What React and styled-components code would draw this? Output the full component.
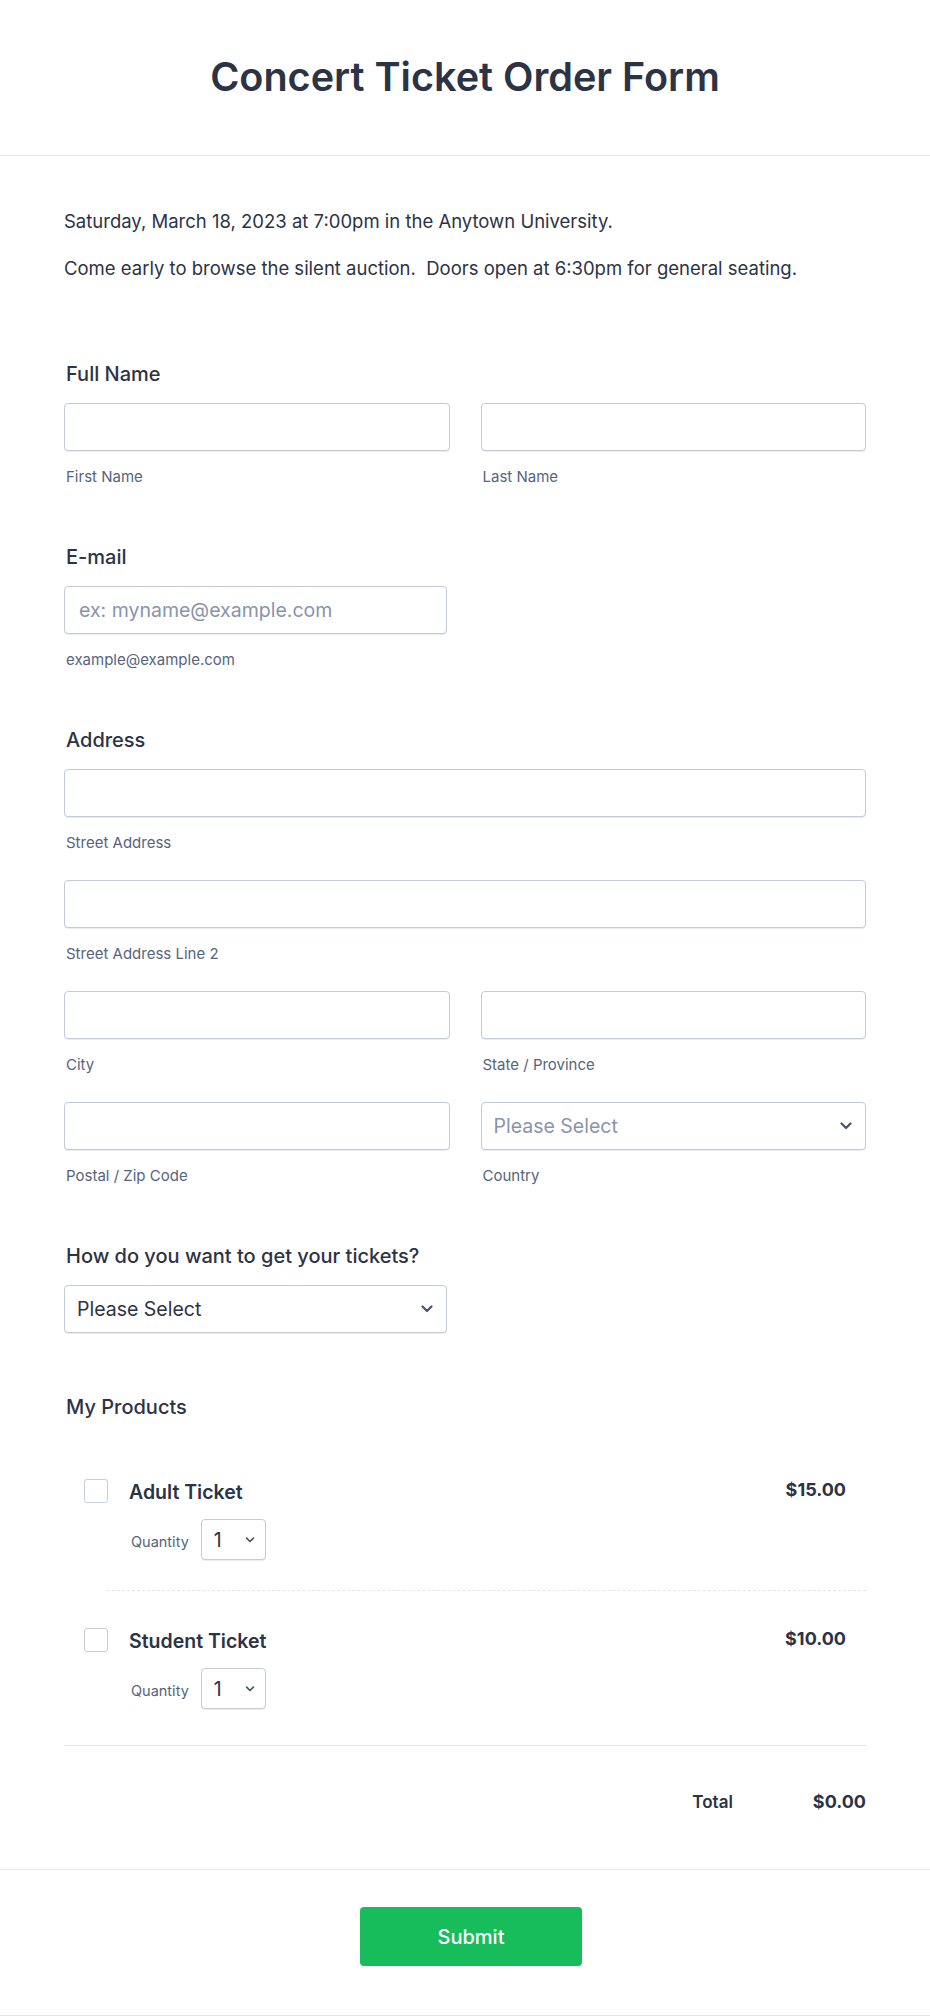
import React from 'react';
import styled, { createGlobalStyle } from 'styled-components';

const Global = createGlobalStyle`
  * { box-sizing: border-box; }
  body {
    margin: 0;
    background: #fff;
    font-family: Inter, "Noto Sans", sans-serif;
    color: #2c3345;
  }
`;

const Page = styled.div`
  width: 930px;
  background: #fff;
  display: flex;
  flex-direction: column;
`;

const Header = styled.header`
  padding: 53px 0 54px;
  border-bottom: 1px solid #e3e5f5;
  text-align: center;
`;

const Title = styled.h1`
  margin: 0;
  font-size: 39.6px;
  line-height: 48px;
  font-weight: 600;
  color: #2c3345;
`;

const Body = styled.main`
  padding: 53px 64px 55px;
`;

const Para = styled.p`
  margin: 0 0 23px;
  font-size: 18.5px;
  line-height: 24px;
  &:last-child { margin-bottom: 0; }
`;

const Fields = styled.div`
  display: flex;
  flex-direction: column;
  gap: 59px;
  padding-top: 82px;
`;

const Field = styled.section`
  display: flex;
  flex-direction: column;
  margin-top: ${p => p.$extra || 0}px;
`;

const Label = styled.div`
  font-size: 20px;
  line-height: 24px;
  font-weight: 500;
  padding-left: 2px;
  margin-bottom: 17px;
`;

const Grid = styled.div`
  display: grid;
  grid-template-columns: ${p => (p.$cols === 2 ? '1fr 1fr' : '1fr')};
  column-gap: 31px;
  row-gap: 28px;
  width: ${p => p.$width || '100%'};
`;

const Cell = styled.div`
  display: flex;
  flex-direction: column;
  grid-column: ${p => (p.$full ? '1 / -1' : 'auto')};
`;

const Input = styled.input`
  height: 48px;
  width: 100%;
  border: 1px solid #c3cad8;
  border-radius: 4px;
  padding: 0 14px;
  font-family: inherit;
  font-size: 19.5px;
  color: #2c3345;
  background: #fff;
  outline: none;
  box-shadow: 0 1px 0 rgba(195, 202, 216, 0.35);
  &::placeholder { color: #8894ab; }
`;

const Sub = styled.div`
  margin-top: 17px;
  font-size: 15px;
  line-height: 18px;
  color: #57647e;
  padding-left: 2px;
`;

const SelectWrap = styled.div`
  position: relative;
  width: ${p => p.$width || '100%'};
`;

const Select = styled.select`
  appearance: none;
  -webkit-appearance: none;
  width: 100%;
  height: ${p => (p.$small ? '41px' : '48px')};
  border: 1px solid #c3cad8;
  border-radius: 4px;
  padding: ${p => (p.$small ? '0 0 0 12px' : '0 40px 0 12px')};
  font-family: inherit;
  font-size: 19.5px;
  color: ${p => (p.$placeholder ? '#8894ab' : '#2c3345')};
  background: #fff;
  outline: none;
  box-shadow: 0 1px 0 rgba(195, 202, 216, 0.35);
`;

const Chevron = styled.svg`
  position: absolute;
  right: ${p => (p.$small ? '11px' : '14px')};
  top: 50%;
  transform: translateY(-50%);
  pointer-events: none;
`;

const ChevronIcon = ({ small }) => (
  <Chevron $small={small} width={small ? 10 : 12} height={small ? 6 : 8} viewBox="0 0 12 8" fill="none">
    <path d="M1.5 1.5L6 6l4.5-4.5" stroke="#4a5468" strokeWidth="2.2" strokeLinecap="round" strokeLinejoin="round" />
  </Chevron>
);

const ProductList = styled.div`
  margin-top: 6px;
  padding-bottom: 6px;
  border-bottom: 1px solid #e3e5ec;
`;

const Item = styled.div`
  display: flex;
  align-items: flex-start;
  padding: 38px 20px 30px;
`;

const Check = styled.span`
  width: 24px;
  height: 24px;
  flex: none;
  border: 1px solid #c8cedb;
  border-radius: 3px;
  margin-top: -1px;
  background: #fff;
`;

const Info = styled.div`
  flex: 1;
  margin-left: 21px;
  display: flex;
  flex-direction: column;
`;

const Name = styled.div`
  font-size: 19.5px;
  line-height: 24px;
  font-weight: 600;
`;

const QtyRow = styled.div`
  display: flex;
  align-items: center;
  margin-top: 15px;
  padding-left: 2px;
  gap: 12px;
`;

const QtyLabel = styled.span`
  font-size: 14.5px;
  color: #57647e;
  padding-top: 3px;
`;

const Price = styled.div`
  font-size: 18px;
  line-height: 24px;
  font-weight: 700;
  margin-top: -2px;
`;

const Divider = styled.div`
  margin-left: 43px;
  border-top: 1px dashed #e3e5f0;
`;

const TotalRow = styled.div`
  display: flex;
  justify-content: flex-end;
  align-items: baseline;
  gap: 80px;
  padding-top: 44px;
`;

const TotalLabel = styled.span`
  font-size: 17px;
  line-height: 24px;
  font-weight: 600;
`;

const TotalValue = styled.span`
  font-size: 18px;
  line-height: 24px;
  font-weight: 700;
`;

const Footer = styled.footer`
  border-top: 1px solid #e3e5f5;
  border-bottom: 1px solid #e3e5f5;
  padding: 37px 0 49px 12px;
  display: flex;
  justify-content: center;
`;

const Submit = styled.button`
  width: 222px;
  height: 59px;
  border: none;
  border-radius: 4px;
  background: #18bd5b;
  color: #fff;
  font-family: inherit;
  font-size: 20px;
  font-weight: 500;
  cursor: pointer;
`;

const products = [
  { name: 'Adult Ticket', price: '$15.00' },
  { name: 'Student Ticket', price: '$10.00' },
];

export default function App() {
  return (
    <Page>
      <Global />
      <Header>
        <Title>Concert Ticket Order Form</Title>
      </Header>
      <Body>
        <div>
          <Para>Saturday, March 18, 2023 at 7:00pm in the Anytown University.</Para>
          <Para>Come early to browse the silent auction.&nbsp; Doors open at 6:30pm for general seating.</Para>
        </div>
        <Fields>
          <Field>
            <Label>Full Name</Label>
            <Grid $cols={2}>
              <Cell><Input type="text" /><Sub>First Name</Sub></Cell>
              <Cell><Input type="text" /><Sub>Last Name</Sub></Cell>
            </Grid>
          </Field>
          <Field>
            <Label>E-mail</Label>
            <Grid $width="383px">
              <Cell><Input type="email" placeholder="ex: myname@example.com" /><Sub>example@example.com</Sub></Cell>
            </Grid>
          </Field>
          <Field>
            <Label>Address</Label>
            <Grid $cols={2}>
              <Cell $full><Input type="text" /><Sub>Street Address</Sub></Cell>
              <Cell $full><Input type="text" /><Sub>Street Address Line 2</Sub></Cell>
              <Cell><Input type="text" /><Sub>City</Sub></Cell>
              <Cell><Input type="text" /><Sub>State / Province</Sub></Cell>
              <Cell><Input type="text" /><Sub>Postal / Zip Code</Sub></Cell>
              <Cell>
                <SelectWrap>
                  <Select $placeholder defaultValue="">
                    <option value="">Please Select</option>
                  </Select>
                  <ChevronIcon />
                </SelectWrap>
                <Sub>Country</Sub>
              </Cell>
            </Grid>
          </Field>
          <Field>
            <Label>How do you want to get your tickets?</Label>
            <SelectWrap $width="383px">
              <Select defaultValue="">
                <option value="">Please Select</option>
              </Select>
              <ChevronIcon />
            </SelectWrap>
          </Field>
          <Field $extra={3}>
            <Label>My Products</Label>
            <ProductList>
              {products.map((p, i) => (
                <React.Fragment key={p.name}>
                  {i > 0 && <Divider />}
                  <Item>
                    <Check />
                    <Info>
                      <Name>{p.name}</Name>
                      <QtyRow>
                        <QtyLabel>Quantity</QtyLabel>
                        <SelectWrap $width="65px">
                          <Select $small defaultValue="1">
                            <option value="1">1</option>
                          </Select>
                          <ChevronIcon small />
                        </SelectWrap>
                      </QtyRow>
                    </Info>
                    <Price>{p.price}</Price>
                  </Item>
                </React.Fragment>
              ))}
            </ProductList>
            <TotalRow>
              <TotalLabel>Total</TotalLabel>
              <TotalValue>$0.00</TotalValue>
            </TotalRow>
          </Field>
        </Fields>
      </Body>
      <Footer>
        <Submit type="button">Submit</Submit>
      </Footer>
    </Page>
  );
}
